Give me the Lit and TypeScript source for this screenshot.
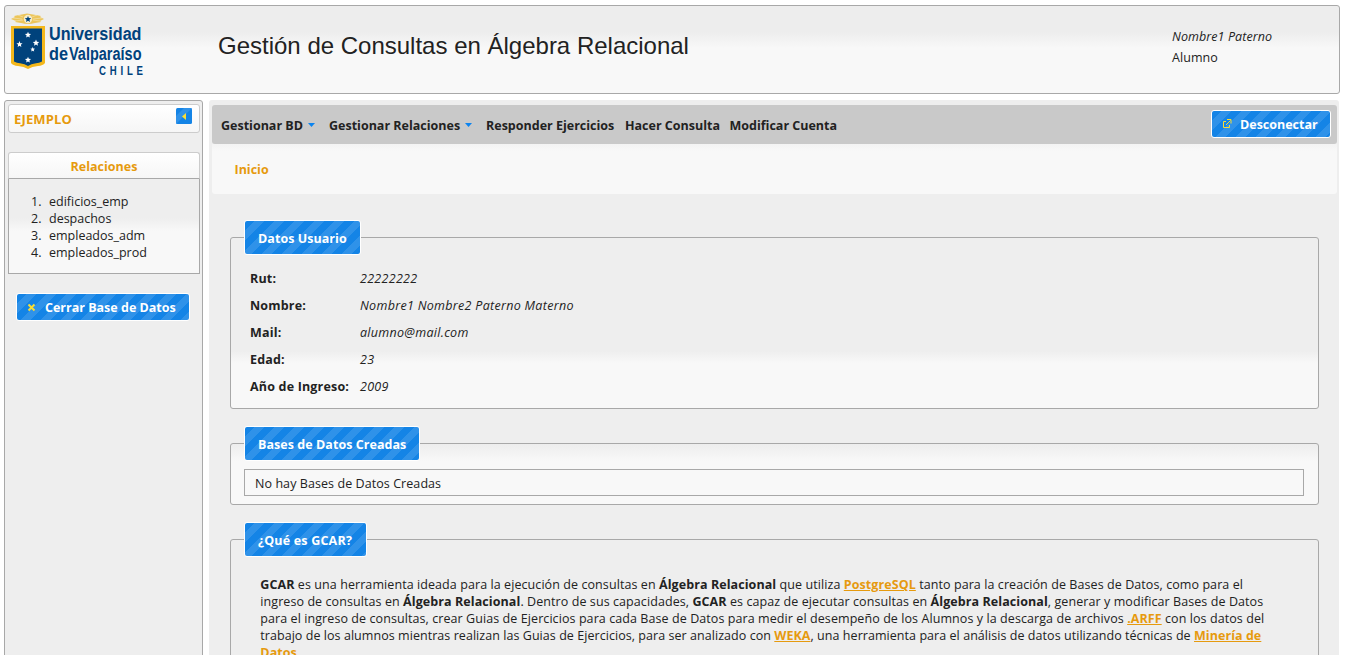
import { LitElement, html, css, svg } from "lit";
import { customElement, property } from "lit/decorators.js";

const star = (x: number, y: number, r: number) => {
  const pts: string[] = [];
  for (let i = 0; i < 10; i++) {
    const a = -Math.PI / 2 + (i * Math.PI) / 5;
    const q = i % 2 ? r * 0.45 : r;
    pts.push(`${(x + q * Math.cos(a)).toFixed(2)},${(y + q * Math.sin(a)).toFixed(2)}`);
  }
  return pts.join(" ");
};

@customElement("uv-logo")
export class UvLogo extends LitElement {
  static styles = css`
    :host { display: block; width: 136px; height: 68px; }
    .logo { display: block; overflow: visible; }
    .name { font: bold 18px "Liberation Sans", Arial, sans-serif; fill: #00427c; }
    .chile { font: bold 12px "Liberation Sans", Arial, sans-serif; fill: #00427c; }
  `;
  render() {
    return html`<svg class="logo" width="136" height="68" viewBox="8 10 136 68">
      <path fill="#ecc55a" d="M11 19l4-2-1-1 5-1 8-1.500 9 1.500 5 1-1 1 4 2-4 2 1 1-6 1q-7 2-14 0l-6-1 1-1z"/>
      <path stroke="#f6edcf" stroke-width=".5" fill="none" d="M13 18l9 1M15 21l8-1M33 19l9-1M33 20l7 1M18 15l5 2M37 15l-5 2"/>
      <circle cx="28" cy="19" r="4.200" fill="#f7edc9"/>
      <polygon fill="#00427c" points=${star(28, 19.3, 3.4)} />
      <path fill="#f3b71b" d="M11 26h34v37q-2 2.500-7 3-6 .5-10 3-4-2.500-10-3-5-.5-7-3z"/>
      <path fill="#00427c" d="M14 28.500h28v33q-3 1.500-6 1.800-5 .5-8 2.700-3-2.200-8-2.700-3-.3-6-1.800z"/>
      ${[[28, 35, 3.2], [19.500, 44.3, 3.2], [36, 43, 3.400], [32.700, 49.500, 2.500], [28, 60, 3.2]].map(
        ([x, y, r]) => svg`<polygon fill="#fff" points=${star(x, y, r)} />`
      )}
      <text class="name" x="49" y="40" textLength="92.500" lengthAdjust="spacingAndGlyphs">Universidad</text>
      <text class="name" x="49" y="60" textLength="19" lengthAdjust="spacingAndGlyphs">de</text>
      <text class="name" x="69" y="60" textLength="72.500" lengthAdjust="spacingAndGlyphs">Valparaíso</text>
      <g transform="translate(99 75) scale(.8 1)"><text class="chile" x="0" y="0" textLength="55">CHILE</text></g>
    </svg>`;
  }
}

@customElement("panel-box")
export class PanelBox extends LitElement {
  @property() label = "";
  static styles = css`
    :host { display: block; margin-bottom: 34px; }
    .box { border: 1px solid #a8a8a8; border-radius: 3px; height: var(--h); padding-left: 13px;
      padding-right: 14px; margin-top: 17px; box-sizing: border-box; background: var(--bg, #eee); }
    .tag { display: block; width: var(--tag); height: 35px; margin-top: -18px; box-sizing: border-box;
      border: 1px solid #fff; border-radius: 3px; color: #fff; font-weight: 700; line-height: 35px;
      padding-left: 13px; white-space: nowrap; letter-spacing: var(--ls, .05px);
      background: repeating-linear-gradient(135deg, #1484e6 0 7.070px, #2f92e9 7.070px 14.140px); }
  `;
  render() {
    return html`<div class="box"><div class="tag">${this.label}</div><slot></slot></div>`;
  }
}

@customElement("app-root")
export class AppRoot extends LitElement {
  static styles = css`
    :host { display: block; height: 655px; overflow: hidden; background: #fff; color: #222;
      font: 12.5px/17px "Open Sans", "Noto Sans", sans-serif; padding: 5px 5px 0 4px; box-sizing: border-box; }
    .header { display: flex; height: 89px; box-sizing: border-box; border: 1px solid #a8a8a8; border-radius: 3px;
      background: linear-gradient(#ededed 26px, #f8f8f8 42px); padding: 4px 0 0 3px; }
    .title { font: 24px/30px "Liberation Sans", Arial, sans-serif; margin: 21px 0 0 74px; width: 954px; white-space: nowrap; }
    .user { line-height: 21px; padding-top: 16px; white-space: nowrap; letter-spacing: .08px; }
    .it { font-style: italic; }
    .body { display: flex; gap: 6px; margin-top: 6px; height: 580px; }
    .side { width: 199px; box-sizing: border-box; border: 1px solid #a8a8a8; border-radius: 3px; background: #eee; padding: 3px 2px 0 3px; }
    .orange { color: #e69a0e; font-weight: 700; }
    .db { display: flex; justify-content: space-between; height: 29px; box-sizing: border-box; border: 1px solid #ccc;
      border-radius: 3px; background: linear-gradient(#fff, #f6f6f6); padding: 3px 7px 0 5px; line-height: 23px; }
    .dbname { font-size: 13px; letter-spacing: .15px; }
    .toggle { display: block; }
    .relhead { margin-top: 19px; height: 27px; box-sizing: border-box; border: 1px solid #ccc; border-bottom-color: #a8a8a8;
      border-radius: 3px 3px 0 0; text-align: center; line-height: 27px; background: linear-gradient(#fff, #f6f6f6); }
    .rels { list-style: none; margin: 0; height: 95px; box-sizing: border-box; border: 1px solid #a8a8a8; border-top: 0;
      background: linear-gradient(#eee 39px, #f8f8f8 52px); padding: 14px 0 0 22px; }
    .rel { display: grid; grid-template-columns: 18px auto; }
    .btn { display: flex; align-items: center; height: 28px; box-sizing: border-box; border: 1px solid #fff; border-radius: 3px;
      color: #fff; font-weight: 700; white-space: nowrap;
      background: repeating-linear-gradient(135deg, #1484e6 0 7.070px, #2f92e9 7.070px 14.140px); }
    .close { width: 174px; margin: 19px 0 0 8px; padding-left: 10px; gap: 9px; }
    .out { width: 120px; margin: -1px 0 0 auto; padding-left: 10px; gap: 8px; }
    .main { flex: 1; min-width: 0; background: #eee; border-radius: 3px 3px 0 0; padding: 5px 2px 0 3px; margin-right: 1px; }
    .menu { display: flex; align-items: center; height: 39px; background: #c9c9c9; border-radius: 3px; padding: 0 6px 0 9px;
      font-weight: 700; white-space: nowrap; }
    .item { display: flex; align-items: center; gap: 5px; box-sizing: border-box; padding-top: 2px; }
    .crumb { height: 50px; box-sizing: border-box; background: linear-gradient(#f3f3f3, #f8f8f8 7px); border-radius: 0 0 3px 3px; padding: 17px 22.500px; }
    .panels { padding: 26px 18px 0; }
    .p1 { --h: 172px; --tag: 117px; --bg: linear-gradient(#eee 113px, #f8f8f8 125px); }
    .p2 { --h: 62px; --tag: 176px; --bg: linear-gradient(#ededed, #f8f8f8 17px); }
    .p3 { --h: 220px; --tag: 123px; --ls: .2px; }
    .data { display: grid; grid-template-columns: 110px auto; grid-auto-rows: 27px; padding: 15px 0 0 6px; line-height: 17px; }
    .key { font-weight: 700; letter-spacing: .18px; }
    .value { font-style: italic; letter-spacing: .3px; }
    .none { margin-top: 8px; border: 1px solid #a8a8a8; height: 27px; box-sizing: border-box; padding: 5px 10px; letter-spacing: .07px; }
    .text { padding: 19px 0 0 16.3px; white-space: nowrap; letter-spacing: .08px; }
    .link { color: #e69a0e; font-weight: 700; text-decoration: underline; }
    .line { display: block; }
    .tight { letter-spacing: .053px; }
  `;
  private item(label: string, width: number, arrow = false) {
    return html`<div class="item" style="width:${width}px"><span>${label}</span>${arrow
      ? html`<svg width="8" height="5"><path d="M0 0h7L3.500 4z" fill="#0b84f0"/></svg>` : ""}</div>`;
  }
  render() {
    const rows = [["Rut:", "22222222"], ["Nombre:", "Nombre1 Nombre2 Paterno Materno"], ["Mail:", "alumno@mail.com"], ["Edad:", "23"], ["Año de Ingreso:", "2009"]];
    return html`
      <div class="header">
        <uv-logo></uv-logo>
        <div class="title">Gestión de Consultas en Álgebra Relacional</div>
        <div class="user"><div class="it">Nombre1 Paterno</div><div>Alumno</div></div>
      </div>
      <div class="body">
        <div class="side">
          <div class="db"><span class="orange dbname">EJEMPLO</span>
            <svg class="toggle" width="16" height="16"><rect width="16" height="16" rx="1.500" fill="#1484e6"/><path d="M0 8L8 0h8L0 16z" fill="#2f92e9"/><path d="M10 5v7L6 8.500z" fill="#f9dd34"/></svg></div>
          <div class="relhead orange">Relaciones</div>
          <ol class="rels">${["edificios_emp", "despachos", "empleados_adm", "empleados_prod"].map((r, i) => html`<li class="rel"><span>${i + 1}.</span><span>${r}</span></li>`)}</ol>
          <div class="btn close"><svg width="9" height="9"><path d="M1.500 1.500l6 6M7.500 1.500l-6 6" stroke="#f9dd34" stroke-width="2"/></svg><span>Cerrar Base de Datos</span></div>
        </div>
        <div class="main">
          <div class="menu">
            ${this.item("Gestionar BD", 108, true)}${this.item("Gestionar Relaciones", 157, true)}${this.item("Responder Ejercicios", 139)}${this.item("Hacer Consulta", 104.5)}${this.item("Modificar Cuenta", 110)}
            <div class="btn out"><svg width="10" height="10" fill="none" stroke="#f9dd34"><path d="M4 2.500H1.500v6h6V6M5 .500h4v4M4 6l4.500-4.500"/></svg><span>Desconectar</span></div>
          </div>
          <div class="crumb orange">Inicio</div>
          <div class="panels">
            <panel-box class="p1" label="Datos Usuario"><div class="data">${rows.map(([k, v]) => html`<span class="key">${k}</span><span class="value">${v}</span>`)}</div></panel-box>
            <panel-box class="p2" label="Bases de Datos Creadas"><div class="none">No hay Bases de Datos Creadas</div></panel-box>
            <panel-box class="p3" label="¿Qué es GCAR?"><div class="text">
              <span class="line"><b>GCAR</b> es una herramienta ideada para la ejecución de consultas en <b>Álgebra Relacional</b> que utiliza <span class="link">PostgreSQL</span> tanto para la creación de Bases de Datos, como para el</span>
              <span class="line">ingreso de consultas en <b>Álgebra Relacional</b>. Dentro de sus capacidades, <b>GCAR</b> es capaz de ejecutar consultas en <b>Álgebra Relacional</b>, generar y modificar Bases de Datos</span>
              <span class="line">para el ingreso de consultas, crear Guias de Ejercicios para cada Base de Datos para medir el desempeño de los Alumnos y la descarga de archivos <span class="link">.ARFF</span> con los datos del</span>
              <span class="line tight">trabajo de los alumnos mientras realizan las Guias de Ejercicios, para ser analizado con <span class="link">WEKA</span>, una herramienta para el análisis de datos utilizando técnicas de <span class="link">Minería de</span></span>
              <span class="line"><span class="link">Datos</span>.</span>
            </div></panel-box>
          </div>
        </div>
      </div>`;
  }
}
